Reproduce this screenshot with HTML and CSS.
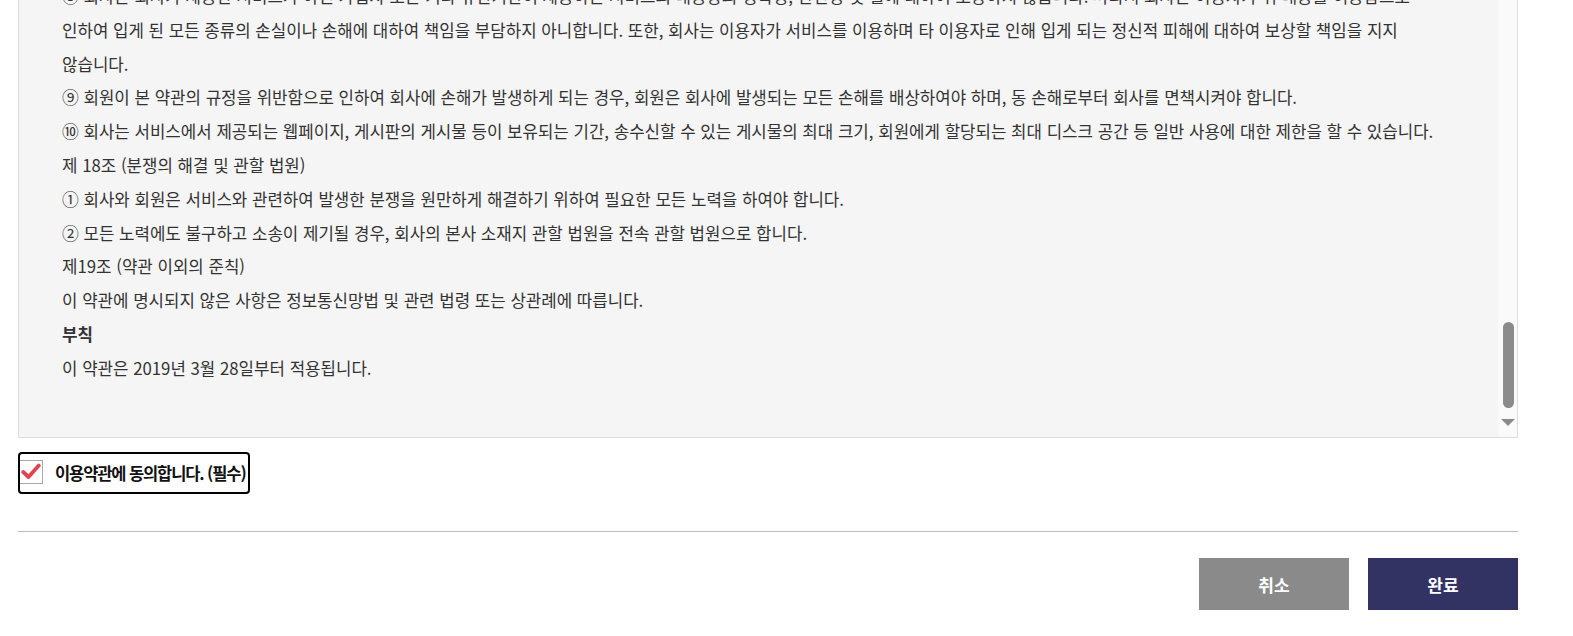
FILE: index.html
```html
<!DOCTYPE html>
<html lang="ko">
<head>
<meta charset="utf-8">
<title>이용약관</title>
<link rel="stylesheet" href="styles.css">
</head>
<body>
<div class="page">
  <div class="terms-box">
    <div class="terms-content">
      <p>⑧ 회사는 회사가 제공한 서비스가 아닌 가입자 또는 기타 유관기관이 제공하는 서비스의 내용상의 정확성, 완전성 및 질에 대하여 보장하지 않습니다. 따라서 회사는 이용자가 위 내용을 이용함으로<br>인하여 입게 된 모든 종류의 손실이나 손해에 대하여 책임을 부담하지 아니합니다. 또한, 회사는 이용자가 서비스를 이용하며 타 이용자로 인해 입게 되는 정신적 피해에 대하여 보상할 책임을 지지<br>않습니다.</p>
      <p>⑨ 회원이 본 약관의 규정을 위반함으로 인하여 회사에 손해가 발생하게 되는 경우, 회원은 회사에 발생되는 모든 손해를 배상하여야 하며, 동 손해로부터 회사를 면책시켜야 합니다.</p>
      <p>⑩ 회사는 서비스에서 제공되는 웹페이지, 게시판의 게시물 등이 보유되는 기간, 송수신할 수 있는 게시물의 최대 크기, 회원에게 할당되는 최대 디스크 공간 등 일반 사용에 대한 제한을 할 수 있습니다.</p>
      <p>제 18조 (분쟁의 해결 및 관할 법원)</p>
      <p>① 회사와 회원은 서비스와 관련하여 발생한 분쟁을 원만하게 해결하기 위하여 필요한 모든 노력을 하여야 합니다.</p>
      <p>② 모든 노력에도 불구하고 소송이 제기될 경우, 회사의 본사 소재지 관할 법원을 전속 관할 법원으로 합니다.</p>
      <p>제19조 (약관 이외의 준칙)</p>
      <p>이 약관에 명시되지 않은 사항은 정보통신망법 및 관련 법령 또는 상관례에 따릅니다.</p>
      <p class="strong">부칙</p>
      <p>이 약관은 2019년 3월 28일부터 적용됩니다.</p>
    </div>
    <div class="scrollbar">
      <div class="thumb"></div>
      <div class="arrow"></div>
    </div>
  </div>

  <div class="agree-row">
    <label class="agree">
      <span class="checkbox">
        <svg width="20" height="17" viewBox="0 0 20 17"><path d="M2.2 9 L7.5 14 L17.8 2.6" fill="none" stroke="#e2434f" stroke-width="3.8" stroke-linecap="round" stroke-linejoin="round"/></svg>
      </span>
      <span class="agree-text">이용약관에 동의합니다. (필수)</span>
    </label>
  </div>

  <div class="divider"></div>

  <div class="actions">
    <button class="btn btn-cancel">취소</button>
    <button class="btn btn-done">완료</button>
  </div>
</div>
</body>
</html>
```

FILE: styles.css
```css
* { box-sizing: border-box; }

html, body {
  margin: 0;
  padding: 0;
  background: #fff;
}

body {
  font-family: "Noto Sans CJK KR", "Noto Sans", sans-serif;
  color: #333;
}

.page {
  width: 1500px;
  margin-left: 18px;
}

.terms-box {
  display: flex;
  height: 438px;
  background: #f5f5f5;
  border: 1px solid #dddddd;
  border-top: 0;
  overflow: hidden;
}

.terms-content {
  flex: 1;
  padding-left: 43px;
  margin-top: -20px;
  font-size: 16.8px;
  line-height: 33.8px;
  color: #333;
}

.terms-content p {
  margin: 0;
  white-space: nowrap;
}

.terms-content .strong {
  font-weight: 700;
}

.scrollbar {
  width: 19px;
  background: #fafafa;
  display: flex;
  flex-direction: column;
  align-items: center;
}

.thumb {
  width: 11px;
  height: 86px;
  margin-top: 322px;
  margin-left: 1px;
  background: #8b8b8b;
  border-radius: 6px;
}

.arrow {
  margin-top: 11px;
  margin-left: 1px;
  width: 0;
  height: 0;
  border-left: 7px solid transparent;
  border-right: 7px solid transparent;
  border-top: 7px solid #8b8b8b;
}

.agree-row {
  margin-top: 14px;
  display: flex;
}

.agree {
  display: flex;
  align-items: center;
  width: 232px;
  height: 42px;
  border: 2px solid #000;
  border-radius: 4px;
  overflow: hidden;
  white-space: nowrap;
  cursor: pointer;
}

.checkbox {
  flex: none;
  width: 24px;
  height: 24px;
  margin-left: -1px;
  margin-top: -3px;
  border: 1px solid #a9a9a9;
  background: #fff;
  display: flex;
  align-items: center;
  justify-content: center;
}

.agree-text {
  margin-left: 12px;
  font-size: 16.5px;
  font-weight: 700;
  letter-spacing: -1.1px;
  color: #111;
}

.divider {
  margin-top: 37px;
  height: 1px;
  background: #bbbbbb;
}

.actions {
  display: flex;
  justify-content: flex-end;
  gap: 19px;
  margin-top: 26px;
}

.btn {
  width: 150px;
  height: 52px;
  border: 0;
  color: #fff;
  font-family: "Noto Sans CJK KR", "Noto Sans", sans-serif;
  font-size: 17px;
  font-weight: 700;
  cursor: pointer;
}

.btn-cancel { background: #8a8a8a; }
.btn-done { background: #333363; }
```
